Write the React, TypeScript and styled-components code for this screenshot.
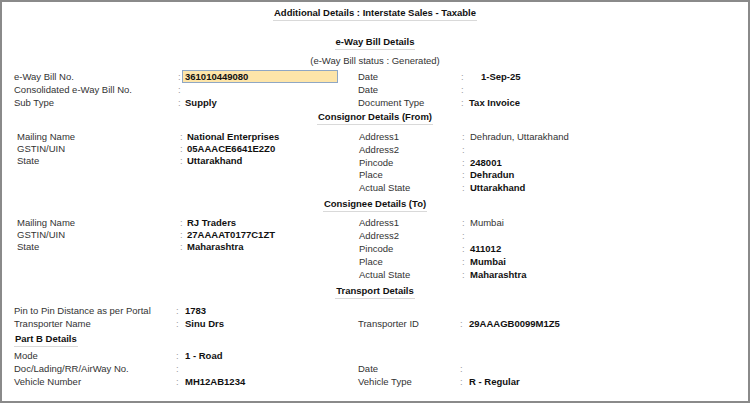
import React from "react";
import styled, { createGlobalStyle } from "styled-components";

const GlobalStyle = createGlobalStyle`
  html, body {
    margin: 0;
    padding: 0;
    background: #ffffff;
  }
  * {
    box-sizing: border-box;
  }
`;

const Frame = styled.div`
  width: 750px;
  height: 403px;
  border: 2px solid #8a8a8a;
  background: #ffffff;
  font-family: "Liberation Sans", Arial, sans-serif;
  font-size: 9.5px;
  color: #333333;
  padding-top: 5px;
  overflow: hidden;
`;

const HeadingBar = styled.div<{ $top: number; $left?: number }>`
  margin-top: ${(p) => p.$top}px;
  text-align: ${(p) => (p.$left !== undefined ? "left" : "center")};
  padding-left: ${(p) => p.$left ?? 0}px;
  line-height: 12px;
`;

const Heading = styled.span`
  display: inline-block;
  font-weight: bold;
  color: #111111;
  padding: 0 1px 1px;
  border-bottom: 1px solid #d9d9d9;
`;

const Status = styled.div`
  margin-top: 5px;
  text-align: center;
  line-height: 12px;
  color: #333333;
`;

const Rows = styled.div<{ $top: number; $left: number }>`
  margin-top: ${(p) => p.$top}px;
  padding-left: ${(p) => p.$left}px;
`;

const PairRow = styled.div<{ $cols: string }>`
  display: grid;
  grid-template-columns: ${(p) => p.$cols};
  align-items: center;
  height: 13px;
  line-height: 13px;
  white-space: nowrap;
`;

const Label = styled.span`
  color: #333333;
`;

const Colon = styled.span`
  color: #9a9a9a;
`;

const Value = styled.span<{ $plain?: boolean; $indent?: number }>`
  font-weight: ${(p) => (p.$plain ? "normal" : "bold")};
  color: ${(p) => (p.$plain ? "#333333" : "#111111")};
  padding-left: ${(p) => p.$indent ?? 0}px;
`;

const InputBox = styled.span`
  display: block;
  height: 13px;
  line-height: 11px;
  padding-left: 2px;
  margin-right: 20px;
  background: #fde5a9;
  border: 1px solid #8fa7c4;
  font-weight: bold;
  color: #111111;
`;

const Party = styled.div<{ $top: number }>`
  display: flex;
  margin-top: ${(p) => p.$top}px;
  padding-left: 15px;
`;

const PartyCol = styled.div<{ $width?: number }>`
  width: ${(p) => (p.$width ? `${p.$width}px` : "auto")};
  flex: ${(p) => (p.$width ? "none" : "1")};
`;

const PartyLine = styled.div<{ $cols: string; $line: number }>`
  display: grid;
  grid-template-columns: ${(p) => p.$cols};
  height: ${(p) => p.$line}px;
  line-height: ${(p) => p.$line}px;
  white-space: nowrap;
`;

type Item = { label: string; value?: string; plain?: boolean };

const LEFT_COLS = "163px 7px 1fr";
const RIGHT_COLS = "103px 8px 1fr";

function PartyBlock({ top, left, right }: { top: number; left: Item[]; right: Item[] }) {
  return (
    <Party $top={top}>
      <PartyCol $width={342}>
        {left.map((it) => (
          <PartyLine key={it.label} $cols={LEFT_COLS} $line={12}>
            <Label>{it.label}</Label>
            <Colon>:</Colon>
            <Value $plain={it.plain}>{it.value}</Value>
          </PartyLine>
        ))}
      </PartyCol>
      <PartyCol>
        {right.map((it) => (
          <PartyLine key={it.label} $cols={RIGHT_COLS} $line={12.8}>
            <Label>{it.label}</Label>
            <Colon>:</Colon>
            <Value $plain={it.plain}>{it.value}</Value>
          </PartyLine>
        ))}
      </PartyCol>
    </Party>
  );
}

const TOP_COLS = "164px 4px 176px 103px 8px 1fr";
const TRANSPORT_COLS = "162px 9px 173px 102px 9px 1fr";

export default function App() {
  return (
    <>
      <GlobalStyle />
      <Frame>
        <HeadingBar $top={0}>
          <Heading>Additional Details : Interstate Sales - Taxable</Heading>
        </HeadingBar>

        <HeadingBar $top={15}>
          <Heading>e-Way Bill Details</Heading>
        </HeadingBar>
        <Status>(e-Way Bill status : Generated)</Status>

        <Rows $top={3} $left={12}>
          <PairRow $cols={TOP_COLS}>
            <Label>e-Way Bill No.</Label>
            <Colon>:</Colon>
            <InputBox>361010449080</InputBox>
            <Label>Date</Label>
            <Colon>:</Colon>
            <Value $indent={12}>1-Sep-25</Value>
          </PairRow>
          <PairRow $cols={TOP_COLS}>
            <Label>Consolidated e-Way Bill No.</Label>
            <Colon>:</Colon>
            <Value />
            <Label>Date</Label>
            <Colon>:</Colon>
            <Value />
          </PairRow>
          <PairRow $cols={TOP_COLS}>
            <Label>Sub Type</Label>
            <Colon>:</Colon>
            <Value $indent={3}>Supply</Value>
            <Label>Document Type</Label>
            <Colon>:</Colon>
            <Value>Tax Invoice</Value>
          </PairRow>
        </Rows>

        <HeadingBar $top={2}>
          <Heading>Consignor Details (From)</Heading>
        </HeadingBar>
        <PartyBlock
          top={6}
          left={[
            { label: "Mailing Name", value: "National Enterprises" },
            { label: "GSTIN/UIN", value: "05AAACE6641E2Z0" },
            { label: "State", value: "Uttarakhand" },
          ]}
          right={[
            { label: "Address1", value: "Dehradun, Uttarakhand", plain: true },
            { label: "Address2" },
            { label: "Pincode", value: "248001" },
            { label: "Place", value: "Dehradun" },
            { label: "Actual State", value: "Uttarakhand" },
          ]}
        />

        <HeadingBar $top={3.5}>
          <Heading>Consignee Details (To)</Heading>
        </HeadingBar>
        <PartyBlock
          top={5}
          left={[
            { label: "Mailing Name", value: "RJ Traders" },
            { label: "GSTIN/UIN", value: "27AAAAT0177C1ZT" },
            { label: "State", value: "Maharashtra" },
          ]}
          right={[
            { label: "Address1", value: "Mumbai", plain: true },
            { label: "Address2" },
            { label: "Pincode", value: "411012" },
            { label: "Place", value: "Mumbai" },
            { label: "Actual State", value: "Maharashtra" },
          ]}
        />

        <HeadingBar $top={3.5}>
          <Heading>Transport Details</Heading>
        </HeadingBar>
        <Rows $top={5.5} $left={12}>
          <PairRow $cols={TRANSPORT_COLS}>
            <Label>Pin to Pin Distance as per Portal</Label>
            <Colon>:</Colon>
            <Value>1783</Value>
            <span />
            <span />
            <span />
          </PairRow>
          <PairRow $cols={TRANSPORT_COLS}>
            <Label>Transporter Name</Label>
            <Colon>:</Colon>
            <Value>Sinu Drs</Value>
            <Label>Transporter ID</Label>
            <Colon>:</Colon>
            <Value>29AAAGB0099M1Z5</Value>
          </PairRow>
        </Rows>

        <HeadingBar $top={3} $left={12}>
          <Heading>Part B Details</Heading>
        </HeadingBar>
        <Rows $top={2} $left={12}>
          <PairRow $cols={TRANSPORT_COLS}>
            <Label>Mode</Label>
            <Colon>:</Colon>
            <Value>1 - Road</Value>
            <span />
            <span />
            <span />
          </PairRow>
          <PairRow $cols={TRANSPORT_COLS}>
            <Label>Doc/Lading/RR/AirWay No.</Label>
            <Colon>:</Colon>
            <Value />
            <Label>Date</Label>
            <Colon>:</Colon>
            <Value />
          </PairRow>
          <PairRow $cols={TRANSPORT_COLS}>
            <Label>Vehicle Number</Label>
            <Colon>:</Colon>
            <Value>MH12AB1234</Value>
            <Label>Vehicle Type</Label>
            <Colon>:</Colon>
            <Value>R - Regular</Value>
          </PairRow>
        </Rows>
      </Frame>
    </>
  );
}
